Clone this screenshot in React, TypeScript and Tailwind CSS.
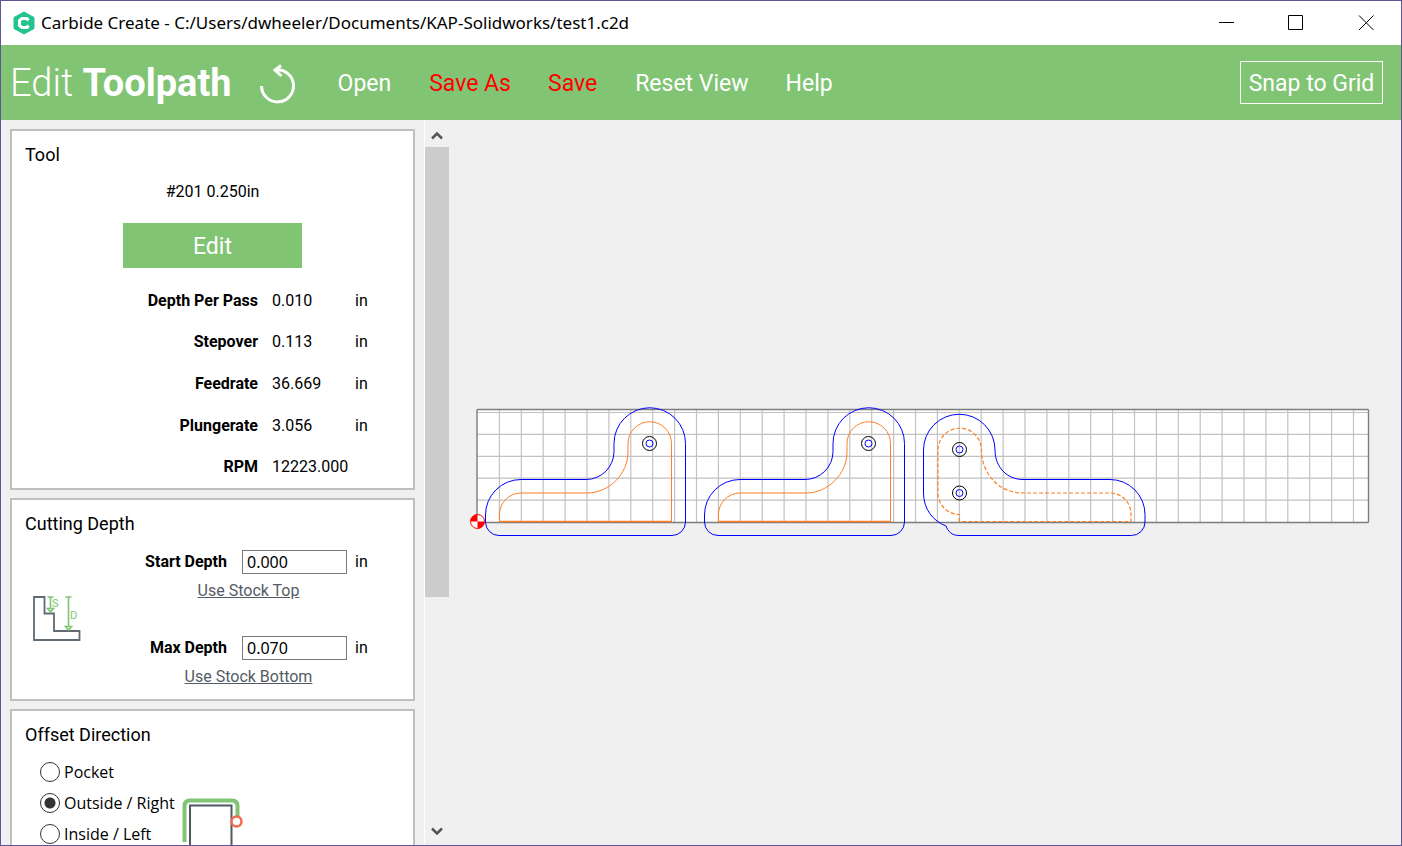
import type { ReactNode } from "react";

const menuItems = [
  { label: "Open", className: "ml-[40px] text-white" },
  { label: "Save As", className: "ml-[38px] text-[#ff0000]" },
  { label: "Save", className: "ml-[37px] text-[#ff0000]" },
  { label: "Reset View", className: "ml-[38px] text-white" },
  { label: "Help", className: "ml-[37px] text-white" },
];

const toolSettings = [
  { label: "Depth Per Pass", value: "0.010", unit: "in" },
  { label: "Stepover", value: "0.113", unit: "in" },
  { label: "Feedrate", value: "36.669", unit: "in" },
  { label: "Plungerate", value: "3.056", unit: "in" },
  { label: "RPM", value: "12223.000", unit: "" },
];

const offsets = ["Pocket", "Outside / Right", "Inside / Left"];

function Logo() {
  return (
    <svg className="ml-[11px] h-6 w-6" viewBox="0 0 24 24">
      <path d="M12 1 22 6.500v11L12 23 2 17.500v-11z" fill="#23c38d" stroke="#23c38d" strokeLinejoin="round" />
      <path
        d="M16.500 9.500 15 7.500h-5L7.500 9.500v5L10 16.500h5l1.500-2"
        fill="none"
        stroke="#fff"
        strokeWidth="3"
        strokeLinejoin="round"
      />
    </svg>
  );
}

function TitleBar() {
  return (
    <div className="flex h-11 shrink-0 items-center bg-white">
      <Logo />
      <span className="ml-[5px] whitespace-nowrap font-['Noto_Sans',sans-serif] text-[17px] text-black">
        Carbide Create - C:/Users/dwheeler/Documents/KAP-Solidworks/test1.c2d
      </span>
      <div className="ml-auto flex h-full">
        <button aria-label="Minimize" className="flex w-[70px] items-center justify-center">
          <svg className="h-4 w-4" viewBox="0 0 16 16" stroke="#000" fill="none">
            <path d="M1 7.500h15" />
          </svg>
        </button>
        <button aria-label="Maximize" className="flex w-[70px] items-center justify-center">
          <svg className="h-4 w-4" viewBox="0 0 16 16" stroke="#000" fill="none">
            <path d="M.5.500h14v14H.5z" />
          </svg>
        </button>
        <button aria-label="Close" className="flex w-[70px] items-center justify-center">
          <svg className="h-4 w-4" viewBox="0 0 16 16" stroke="#000" fill="none">
            <path d="M1 .5l14.500 14.500M15.500.5L1 15" />
          </svg>
        </button>
      </div>
    </div>
  );
}

function Toolbar() {
  return (
    <header className="flex h-[75px] shrink-0 items-center bg-[#81c474] pr-[18px] pl-[9px] text-white">
      <h1 className="pt-0.5 text-[38px] font-light whitespace-nowrap">
        Edit <b className="font-bold">Toolpath</b>
      </h1>
      <button aria-label="Undo" className="ml-[26px]">
        <svg className="h-[42px] w-10" viewBox="258 62 40 42" fill="none" stroke="#fff" strokeWidth="3">
          <path d="M261.500 86a16 16 0 1 0 14-16" />
          <path d="M281 65.500l-6 4.500 6.500 6" />
        </svg>
      </button>
      <nav className="flex text-[23px] whitespace-nowrap">
        {menuItems.map((item) => (
          <button key={item.label} className={`pt-1 ${item.className}`}>
            {item.label}
          </button>
        ))}
      </nav>
      <button className="ml-auto h-[43px] w-[143px] border border-white pt-1 text-[23px] whitespace-nowrap">
        Snap to Grid
      </button>
    </header>
  );
}

function Panel({ title, children }: { title: string; children: ReactNode }) {
  return (
    <section className="shrink-0 border-2 border-[#bfbfbf] bg-white pt-3 pl-[13px]">
      <h2 className="text-[18px] leading-6">{title}</h2>
      {children}
    </section>
  );
}

function ToolPanel() {
  return (
    <Panel title="Tool">
      <div className="mr-[13px] flex flex-col items-center">
        <p className="mt-[13px] text-[16px] leading-6">#201 0.250in</p>
        <button className="mt-[19px] h-[45px] w-[179px] bg-[#81c474] pt-1 text-[23px] text-white">Edit</button>
      </div>
      <dl className="mt-3 grid h-52 grid-rows-5">
        {toolSettings.map((row) => (
          <div key={row.label} className="flex items-center text-[16px]">
            <dt className="w-[233px] text-right font-bold">{row.label}</dt>
            <dd className="ml-[14px] w-[83px]">{row.value}</dd>
            <dd>{row.unit}</dd>
          </div>
        ))}
      </dl>
    </Panel>
  );
}

function DepthIcon() {
  return (
    <svg className="mb-1 ml-[3px] h-14 w-14" viewBox="28 590 56 56" fill="none">
      <path d="M34 597h10.500v16.500h9.500v17.500h25.500v9H34z" stroke="#5f6a73" strokeWidth="1.800" />
      <g stroke="#81c474" strokeWidth="1.600">
        <path d="M47.500 597h6M50.500 597v12M47.500 608.500h6l-3 3.500z" />
        <path d="M65.500 597h6M68.500 597v30M65.500 626.500h6l-3 3.500z" />
      </g>
      <g fill="#81c474" fontFamily="Roboto" fontSize="11">
        <text x="52" y="607">S</text>
        <text x="70" y="619">D</text>
      </g>
    </svg>
  );
}

function DepthField({ id, label, value, action }: { id: string; label: string; value: string; action: string }) {
  return (
    <div className="w-[300px] text-[16px]">
      <div className="flex h-6 items-center">
        <label htmlFor={id} className="w-[143px] text-right font-bold">
          {label}
        </label>
        <input
          id={id}
          defaultValue={value}
          className="ml-[15px] h-6 w-[105px] border border-[#7a7a7a] bg-white px-1 font-['Noto_Sans',sans-serif]"
        />
        <span className="ml-2">in</span>
      </div>
      <div className="mt-[5px] pl-[29px] text-center leading-6 text-[#535b66]">
        <a href="#" className="underline">
          {action}
        </a>
      </div>
    </div>
  );
}

function CuttingDepthPanel() {
  return (
    <Panel title="Cutting Depth">
      <div className="mt-[14px] flex items-center pb-[10px]">
        <DepthIcon />
        <div className="flex flex-col gap-[33px]">
          <DepthField id="start-depth" label="Start Depth" value="0.000" action="Use Stock Top" />
          <DepthField id="max-depth" label="Max Depth" value="0.070" action="Use Stock Bottom" />
        </div>
      </div>
    </Panel>
  );
}

function OffsetPanel() {
  return (
    <Panel title="Offset Direction">
      <div className="mt-[9px] flex h-48">
        <div className="ml-[15px] flex flex-col font-['Open_Sans',sans-serif] text-[16px]">
          {offsets.map((name) => (
            <label key={name} className="flex h-[31px] items-center gap-1">
              <input
                type="radio"
                name="offset"
                defaultChecked={name === "Outside / Right"}
                className="h-5 w-5 appearance-none rounded-full border border-[#333] bg-white checked:bg-[radial-gradient(circle,#333_5px,#fff_6px)]"
              />
              {name}
            </label>
          ))}
        </div>
        <svg className="mt-[38px] ml-1 h-28 w-20" viewBox="176 794 80 112" fill="none">
          <path d="M181.500 842v-36q0-5.500 5.500-5.500h42q5.500 0 5.500 5.500v12" stroke="#81c474" strokeWidth="4" />
          <path d="M187 900v-94.500h41.500V900" stroke="#4f5962" strokeWidth="2" />
          <circle cx="233.500" cy="821.500" r="5" fill="#fff" stroke="#f26b4e" strokeWidth="2.500" />
        </svg>
      </div>
    </Panel>
  );
}

function ScrollBar() {
  return (
    <div className="flex w-[26px] shrink-0 flex-col border-l border-white pr-px">
      <button aria-label="Scroll up" className="flex h-[27px] shrink-0 items-center justify-center">
        <svg className="mt-1 h-3 w-3" viewBox="0 0 12 12" fill="none" stroke="#555" strokeWidth="2.500">
          <path d="M1 8.500l5-5 5 5" />
        </svg>
      </button>
      <div className="grow">
        <div className="h-[450px] bg-[#cdcdcd]" />
      </div>
      <button aria-label="Scroll down" className="flex h-[27px] shrink-0 items-center justify-center">
        <svg className="h-3 w-3" viewBox="0 0 12 12" fill="none" stroke="#555" strokeWidth="2.500">
          <path d="M1 2.500l5 5 5-5" />
        </svg>
      </button>
    </div>
  );
}

const PITCH = 21.9;
const columns = Array.from({ length: 40 }, (_, i) => 477.5 + (i + 1) * PITCH);
const rows = Array.from({ length: 5 }, (_, i) => 522 - (i + 1) * PITCH);

function Hole({ x, y }: { x: number; y: number }) {
  return (
    <g fill="none">
      <circle cx={x} cy={y} r="7" stroke="#000" />
      <circle cx={x} cy={y} r="3.500" stroke="#00f" />
    </g>
  );
}

function Bracket() {
  return (
    <g fill="none">
      <path
        d="M499.500 521.500v-7a21.500 21.500 0 0 1 21.500-21.500h66c22 0 41-19 41-41v-8.500a21.700 21.700 0 0 1 43.500 0V521.500z"
        stroke="#ff7f27"
      />
      <path d="M499 521.500h173" stroke="#ff7f27" strokeWidth="1.600" />
      <path
        d="M485.500 522v-7a35.500 35.500 0 0 1 35.500-35.500h65a28 28 0 0 0 28-28v-8a35.700 35.700 0 0 1 71.500 0V522a13.500 13.500 0 0 1-13.500 13.500H499a13.500 13.500 0 0 1-13.500-13.500z"
        stroke="#00f"
      />
      <Hole x={649.5} y={443.5} />
    </g>
  );
}

function Canvas() {
  return (
    <main className="min-w-0 grow">
      <svg className="h-full w-full" viewBox="450 120 951 725" role="img" aria-label="Toolpath preview">
        <rect x="477" y="409.500" width="891.500" height="113" fill="#fff" />
        <g stroke="#c2c2c2" strokeWidth="1.200">
          {columns.map((x) => (
            <path key={x} d={`M${x} 410V522`} />
          ))}
          {rows.map((y) => (
            <path key={y} d={`M477 ${y}H1368`} />
          ))}
        </g>
        <rect x="477" y="409.500" width="891.500" height="113" rx="1" fill="none" stroke="#7d7d7d" strokeWidth="1.400" />
        <Bracket />
        <g transform="translate(219 0)">
          <Bracket />
        </g>
        <path
          d="M959.500 521.500v-7a21.500 21.500 0 0 1-21.500-21.500v-43a21.500 21.500 0 0 1 43.500 0c0 24 18 43 41 43h88a21 21 0 0 1 20.500 21.500v7z"
          fill="none"
          stroke="#ff7f27"
          strokeWidth="1.200"
          strokeDasharray="4 2"
        />
        <path
          d="M923.500 450a35.700 35.700 0 0 1 71.500 0c0 17 12 29.500 28 29.500h87a35 35 0 0 1 35 35V522a13.500 13.500 0 0 1-13.500 13.500H959c-7 0-11-4-13-9.500-13-5-22.500-17-22.500-33z"
          fill="none"
          stroke="#00f"
        />
        <Hole x={959.5} y={449.5} />
        <Hole x={959.5} y={493} />
        <circle cx="477.500" cy="521.500" r="7" fill="#fff" stroke="#f00" />
        <path d="M477.500 521.500v-7a7 7 0 0 0-7 7zM477.500 521.500v7a7 7 0 0 0 7-7z" fill="#f00" />
      </svg>
    </main>
  );
}

export default function App() {
  return (
    <div className="flex h-screen flex-col overflow-hidden border border-[#62549a] bg-[#f0f0f0] font-['Roboto',sans-serif] text-black">
      <TitleBar />
      <Toolbar />
      <div className="flex min-h-0 grow">
        <aside className="flex w-[423px] shrink-0 flex-col gap-2 overflow-hidden px-[9px] pt-[9px]">
          <ToolPanel />
          <CuttingDepthPanel />
          <OffsetPanel />
        </aside>
        <ScrollBar />
        <Canvas />
      </div>
    </div>
  );
}
